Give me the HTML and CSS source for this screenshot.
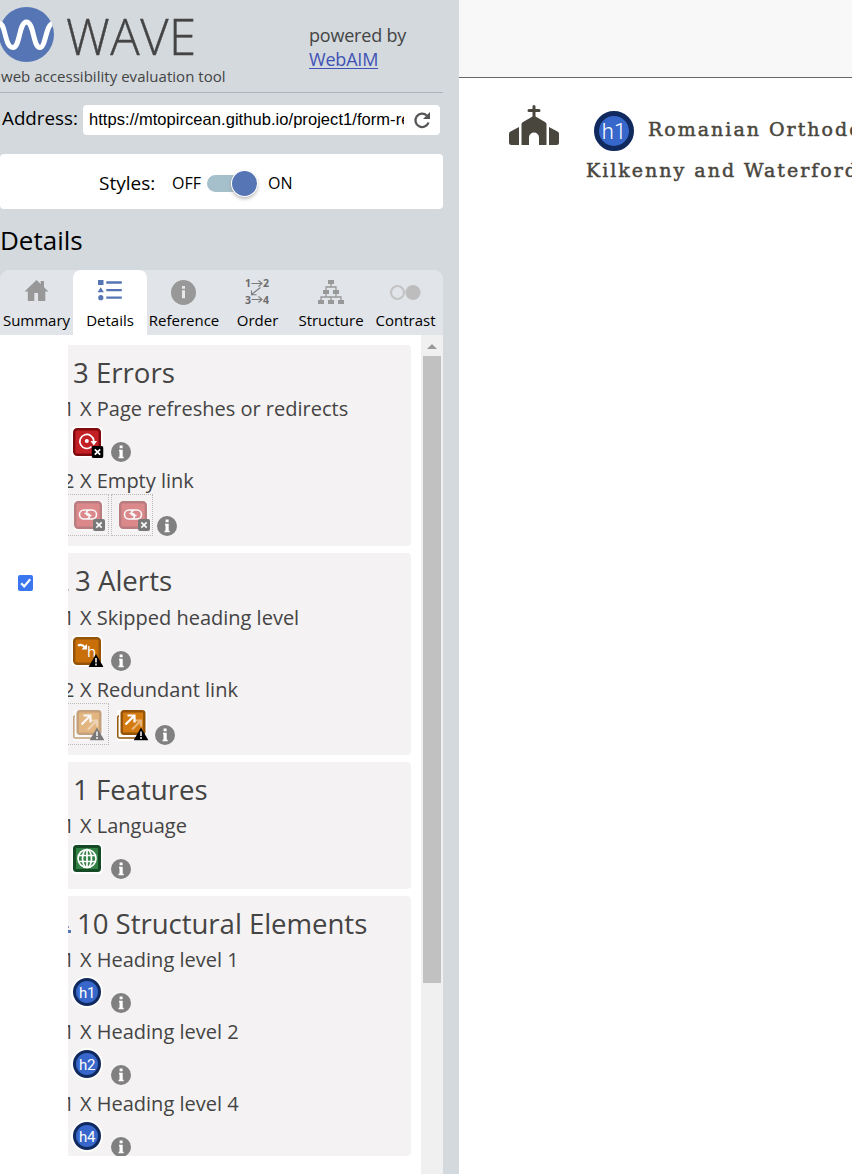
FILE: index.html
```html
<!DOCTYPE html>
<html lang="en">
<head>
<meta charset="utf-8">
<title>WAVE Report</title>
<link rel="stylesheet" href="styles.css">
</head>
<body>
<svg width="0" height="0" class="defs">
  <defs>
    <symbol id="info" viewBox="0 0 20 20"><circle cx="10" cy="10" r="10" fill="#808080"/><path d="M8.600 3.600h3v2.700h-3zM8 7.700h3.700v7h1v1.600H7.500v-1.600h1V9.200H8z" fill="#fff"/></symbol>
    <symbol id="xbadge" viewBox="0 0 12 12"><rect width="12" height="12" rx="2" fill="#000"/><path d="M3.300 3.300l5.400 5.400M8.700 3.300L3.300 8.700" stroke="#fff" stroke-width="1.700"/></symbol>
    <symbol id="warn" viewBox="0 0 15 13"><path d="M7.500 0L15 13H0z" fill="#000"/><path d="M7.500 4v4.600M7.500 9.600v1.800" stroke="#fff" stroke-width="1.500"/></symbol>
    <symbol id="emptylink" viewBox="0 0 32 32"><rect x="-1.500" y="-1.500" width="31" height="31" rx="4" fill="#fff"/><rect x="1.200" y="1.200" width="25.600" height="25.600" rx="3" fill="#c32026" stroke="#80090d" stroke-width="2.400"/><path d="M15.500 9H10a4.500 4.500 0 0 0 0 9h2.500c2.200 0 3-1.500 3-3.300c0-1.500-1-2.200-2.500-2.200H10.500M12.500 18H18a4.500 4.500 0 0 0 0-9h-2.500c-2.200 0-3 1.500-3 3.300c0 1.500 1 2.200 2.500 2.200h2.500" fill="none" stroke="#fff" stroke-width="1.600"/><use href="#xbadge" x="19" y="18" width="12" height="12"/></symbol>
    <symbol id="redundant" viewBox="0 0 32 32"><path d="M4 2.500H2.500a1.500 1.500 0 0 0-1.500 1.500v23a1.500 1.500 0 0 0 1.500 1.500h22" fill="none" stroke="#fff" stroke-width="5"/><path d="M2.500 6H1.800a1 1 0 0 0-1 1v19.500a1.500 1.500 0 0 0 1.500 1.500H23" fill="none" stroke="#955307" stroke-width="1.500"/><rect x="2" y="-1.500" width="28" height="27.500" rx="3" fill="#fff"/><rect x="4.700" y="1.200" width="22.600" height="22.600" rx="2" fill="#d37a10" stroke="#955307" stroke-width="2.400"/><path d="M15 19.500l8-8M18 10.500h6v6" fill="none" stroke="#e9b476" stroke-width="2.200"/><path d="M8.500 14.500l8-8M10.500 5.500h7v7" fill="none" stroke="#fff" stroke-width="2.200"/><use href="#warn" x="16.500" y="17.500" width="15" height="13"/></symbol>
  </defs>
</svg>
<div class="app">
  <aside class="sidebar">
    <header class="brand">
      <div class="brand-left">
        <div class="logo">
          <svg class="logo-mark" viewBox="0 0 54 55"><circle cx="26.500" cy="27.500" r="27.500" fill="#5575b5"/><path d="M-1 16.500C2 16.500 3 19 4.500 25C7 35 8.500 40.500 13 40.500C20 40.500 19 15 26.500 15C34 15 33 40.500 40 40.500C45.500 40.500 46 18 52 17" fill="none" stroke="#fff" stroke-width="5"/></svg>
          <span class="logo-text">WAVE</span>
        </div>
        <div class="tagline">web accessibility evaluation tool</div>
      </div>
      <div class="powered">powered by<br><a href="#">WebAIM</a></div>
    </header>
    <div class="address">
      <label class="address-label">Address:</label>
      <div class="address-box">
        <span class="address-url">https://mtopircean.github.io/project1/form-re</span>
        <svg class="refresh" viewBox="0 0 18 18"><path d="M15.500 11.500A6.700 6.700 0 1 1 13.800 4.500" fill="none" stroke="#555" stroke-width="2.300"/><path d="M17 1v7h-7z" fill="#555"/></svg>
      </div>
    </div>
    <div class="styles-box">
      <span class="styles-label">Styles:</span><span class="off">OFF</span>
      <span class="switch"><span class="knob"></span></span>
      <span class="on">ON</span>
    </div>
    <h2 class="section-title">Details</h2>
    <nav class="tabs">
      <div class="tab"><svg viewBox="0 0 26 26"><path d="M12.500 2L.5 13.500h3.300V23h6.500v-8H14v8h7.300v-9.500h3.200l-4.500-4.300V3h-3.300v3z" fill="#989898"/></svg><span>Summary</span></div>
      <div class="tab active"><svg viewBox="0 0 26 26"><path d="M1 2h5.500v5H1zM3.700 9.300l3.200 5H.6z" fill="#5575b5"/><circle cx="3.800" cy="19.700" r="2.600" fill="#5575b5"/><path d="M9.300 4.500h15.500M9.300 12.200h15.500M9.300 19.700h15.500" stroke="#5575b5" stroke-width="2.300"/></svg><span>Details</span></div>
      <div class="tab"><svg viewBox="0 0 26 26"><circle cx="12.500" cy="14.500" r="12.500" fill="#989898"/><path d="M11 8h3v2.800h-3zM11 12.300h3v8h-3z" fill="#e6e8ea"/></svg><span>Reference</span></div>
      <div class="tab"><svg viewBox="0 0 26 26"><g fill="#6c6c6c" font-family="Open Sans" font-size="10.500" font-weight="700"><text x="0" y="9">1</text><text x="18" y="9">2</text><text x="0" y="25.500">3</text><text x="18" y="25.500">4</text></g><path d="M6.500 5.500h10M13.500 2.500l3.500 3-3.500 3M6.500 21.500h10M13.500 18.500l3.500 3-3.500 3M15.500 9.500L6.500 16.500M6.500 12.500v4.300h5" fill="none" stroke="#7b7b7b" stroke-width="1.100"/></svg><span>Order</span></div>
      <div class="tab"><svg viewBox="0 0 26 26"><path d="M10 2h6v4h-6zM5 12h6v4H5zM15 12h6v4h-6zM0 22h6v4H0zM10 22h6v4h-6zM20 22h6v4h-6z" fill="#989898"/><path d="M13 6v3M8 12V9h10v3M8 16v3M18 16v3M3 22v-3h20v3M13 19v3" fill="none" stroke="#989898" stroke-width="1.300"/></svg><span>Structure</span></div>
      <div class="tab"><svg class="wide" viewBox="0 0 32 26"><circle cx="7.500" cy="14.500" r="6.500" fill="none" stroke="#c4c4c4" stroke-width="2.200"/><circle cx="23" cy="14.500" r="7.600" fill="#bdbdbd"/></svg><span>Contrast</span></div>
    </nav>
    <div class="panel">
      <div class="checks"><svg class="checkbox" viewBox="0 0 15 16"><rect width="15" height="16" rx="2" fill="#3a76f0"/><path d="M3.200 8.200l3 3.200 6-7.200" fill="none" stroke="#fff" stroke-width="2.200"/></svg></div>
      <div class="groups">
        <section class="card errors">
          <h3><span>3 Errors</span></h3>
          <p><b class="one">1</b><span>X Page refreshes or redirects</span></p>
          <div class="icons"><svg class="ico" viewBox="0 0 32 32"><rect x="-1.500" y="-1.500" width="31" height="31" rx="4" fill="#fff"/><rect x="1.200" y="1.200" width="25.600" height="25.600" rx="3" fill="#c32026" stroke="#80090d" stroke-width="2.400"/><path d="M18.500 18.700A7 7 0 1 1 20.800 13" fill="none" stroke="#fff" stroke-width="1.700"/><path d="M17.500 13h6.500l-3.200 4.500z" fill="#fff"/><circle cx="13.800" cy="13" r="2" fill="#fff"/><use href="#xbadge" x="18.500" y="18" width="12" height="12"/></svg><svg class="info"><use href="#info"/></svg></div>
          <p><b>2</b><span>X Empty link</span></p>
          <div class="icons"><span class="hidden-item first"><svg class="ico"><use href="#emptylink"/></svg></span><span class="hidden-item second"><svg class="ico"><use href="#emptylink"/></svg></span><svg class="info after-pair"><use href="#info"/></svg></div>
        </section>
        <section class="card alerts">
          <h3><i class="edge"></i><span class="h-alerts">3 Alerts</span></h3>
          <p><b class="one">1</b><span>X Skipped heading level</span></p>
          <div class="icons"><svg class="ico" viewBox="0 0 32 32"><rect x="-1.500" y="-1.500" width="31" height="31" rx="4" fill="#fff"/><rect x="1.200" y="1.200" width="25.600" height="25.600" rx="3" fill="#c96f09" stroke="#955307" stroke-width="2.400"/><path d="M5 8.500c3-1.500 5-.5 6.500 1.500" fill="none" stroke="#fff" stroke-width="2.200"/><path d="M14 7v5.500H8.500z" fill="#fff"/><text x="14" y="19.500" font-family="Open Sans" font-size="15" fill="#fff">h</text><use href="#warn" x="15.500" y="17" width="15" height="13"/></svg><svg class="info"><use href="#info"/></svg></div>
          <p><b>2</b><span>X Redundant link</span></p>
          <div class="icons"><span class="hidden-item first"><svg class="ico"><use href="#redundant"/></svg></span><svg class="ico next"><use href="#redundant"/></svg><svg class="info after-next"><use href="#info"/></svg></div>
        </section>
        <section class="card features">
          <h3><span>1 Features</span></h3>
          <p><b class="one">1</b><span>X Language</span></p>
          <div class="icons"><svg class="ico" viewBox="0 0 32 32"><rect x="-1.500" y="-1.500" width="31" height="30.500" rx="4" fill="#fff"/><rect x="1.500" y="1.500" width="25" height="24" rx="2" fill="#318044" stroke="#154b24" stroke-width="3"/><g fill="none" stroke="#fff" stroke-width="1.700"><circle cx="14" cy="13.500" r="9"/><ellipse cx="14" cy="13.500" rx="4.500" ry="9"/><path d="M14 4.500v18M5.500 10.500h17M5.500 16.500h17"/></g></svg><svg class="info"><use href="#info"/></svg></div>
        </section>
        <section class="card structure">
          <h3><i class="edge blue"></i><span class="h-structure">10 Structural Elements</span></h3>
          <p><b class="one">1</b><span>X Heading level 1</span></p>
          <div class="icons"><span class="hbadge">h1</span><svg class="info"><use href="#info"/></svg></div>
          <p><b class="one">1</b><span>X Heading level 2</span></p>
          <div class="icons"><span class="hbadge">h2</span><svg class="info"><use href="#info"/></svg></div>
          <p><b class="one">1</b><span>X Heading level 4</span></p>
          <div class="icons"><span class="hbadge">h4</span><svg class="info"><use href="#info"/></svg></div>
        </section>
      </div>
      <div class="scrollbar"><div class="arrow"></div><div class="thumb"></div></div>
    </div>
  </aside>
  <main class="page">
    <div class="page-bar"></div>
    <div class="page-head">
      <svg class="church" viewBox="0 0 50 42"><path d="M23.500 1.500a1.500 1.500 0 0 1 3 0V4H30a1.500 1.500 0 0 1 0 3h-3.500v4.500L36 17c1 .6 1.500 1.200 1.500 2.500V40H30v-7.500a5 5 0 0 0-10 0V40h-7.500V19.500c0-1.300.5-1.900 1.500-2.500l9.500-5.500V7H20a1.500 1.500 0 0 1 0-3h3.500zM10 22v18H2.500A2.500 2.500 0 0 1 0 37.500V29c0-1.300.5-2 1.500-2.600zM40 22l8.500 4.400c1 .6 1.500 1.300 1.500 2.600v8.500a2.500 2.500 0 0 1-2.500 2.500H40z" fill="#49463d"/></svg>
      <h1 class="page-title"><span class="line first-line"><span class="hbadge big">h1</span><span class="first-words">Romanian Orthodox</span></span><span class="line">Kilkenny and Waterford</span></h1>
    </div>
  </main>
</div>
</body>
</html>
```
FILE: styles.css
```css
* { box-sizing: border-box; }
body { margin: 0; width: 852px; height: 1174px; overflow: hidden; background: #fff; font-family: "Open Sans", sans-serif; color: #000; }
.defs { display: block; height: 0; }
.app { display: flex; height: 1174px; }
svg { display: block; overflow: visible; flex: none; }
h1, h2, h3, p { margin: 0; font-weight: 400; }
span { white-space: nowrap; }

.sidebar { width: 459px; flex: none; padding-right: 16px; background: #d3d9dd; display: flex; flex-direction: column; }
.brand { height: 93px; border-bottom: 1px solid #abb4bd; display: flex; overflow: hidden; color: #444; }
.brand-left { width: 309px; flex: none; }
.logo { display: flex; height: 65px; padding-top: 7px; }
.logo-mark { width: 54px; height: 55px; overflow: hidden; }
.logo-text { margin-left: 12px; font-size: 49px; font-weight: 300; line-height: 58px; letter-spacing: 0.5px; -webkit-text-stroke: 0.4px #444; }
.tagline { font-size: 15px; line-height: 22px; padding-left: 1px; white-space: nowrap; letter-spacing: 0.03px; }
.powered { padding-top: 23px; font-size: 18px; line-height: 24px; letter-spacing: -0.2px; white-space: nowrap; }
.powered a { color: #3f51b5; text-underline-offset: 2px; text-decoration-thickness: 1px; }

.address { display: flex; padding: 12px 3px 0 2px; height: 61px; }
.address-label { width: 81px; font-size: 18.8px; line-height: 27px; }
.address-box { width: 357px; height: 30px; background: #fff; border-radius: 4px; display: flex; align-items: center; padding-left: 6px; }
.address-url { width: 315px; overflow: hidden; font: 16.500px/26px "Liberation Sans", Arial, sans-serif; letter-spacing: 0.05px; padding-bottom: 2px; }
.refresh { width: 18px; height: 18px; margin-left: 9px; }

.styles-box { height: 55px; background: #fff; border-radius: 4px; display: flex; align-items: center; padding: 0 0 0 99px; }
.styles-label { width: 73px; font-size: 19px; line-height: 24px; margin-top: 3px; }
.off, .on { font-size: 16px; margin-top: 3px; }
.off { width: 35px; }
.switch { width: 50px; height: 17px; margin-top: 4px; border-radius: 9px; background: #a5bfcb; display: flex; align-items: center; justify-content: flex-end; }
.knob { width: 25px; height: 25px; border-radius: 50%; background: #5575b5; box-shadow: 0 0 0 1px #fff, 0 2px 4px #999; flex: none; }
.on { margin-left: 11px; }
.section-title { height: 61px; font-size: 26px; line-height: 62px; }

.tabs { display: grid; grid-template-columns: 73px 74px 74px 73px 74px 75px; height: 65px; background: #e1e4e9; border-radius: 9px 9px 0 0; font-size: 15px; }
.tab { display: flex; flex-direction: column; align-items: center; padding-top: 8px; }
.tab svg { width: 26px; height: 26px; }
.tab svg.wide { width: 32px; }
.tab span { line-height: 22px; margin-top: 5px; }
.tab.active { background: #fff; border-radius: 8px 8px 0 0; }

.panel { flex: 1; background: #fff; display: flex; }
.checks { width: 68px; padding: 240px 0 0 18px; }
.checkbox { width: 15px; height: 16px; }
.groups { width: 343px; margin-right: 10px; padding-top: 10px; display: flex; flex-direction: column; gap: 7px; }
.card { background: #f4f2f3; border-radius: 0 4px 4px 0; overflow: hidden; color: #444; flex: none; }
.errors { height: 201px; }
.alerts { height: 202px; }
.features { height: 127px; }
.structure { height: 260px; }
.card h3 { height: 46px; line-height: 54px; font-size: 27.600px; padding-left: 5px; display: flex; position: relative; }
.card.alerts h3 { height: 47px; line-height: 55px; }
.card p { height: 36px; line-height: 36px; font-size: 20px; display: flex; }
.card p b { font-weight: 400; width: 17px; margin-left: -5px; }
.card p b.one { width: 17px; margin-left: -5px; }
.edge { position: absolute; left: 0; top: 36px; width: 1px; height: 2px; background: #bbb; }
.edge.blue { top: 30px; width: 3px; height: 7px; background: linear-gradient(90deg, #8595c0 0 1px, transparent 1px) 0 0 / 3px 2px no-repeat, linear-gradient(#5575b5, #5575b5) 0 4px / 3px 3px no-repeat; }
.h-alerts { margin-left: 2px; }
.h-structure { margin-left: 4px; letter-spacing: -0.05px; }
.icons { display: flex; height: 36px; padding-left: 5px; align-items: flex-start; }
.ico { width: 32px; height: 32px; margin-top: 1px; }
.info { width: 20px; height: 20px; margin: 15px 0 0 6px; }
.hidden-item { width: 41px; height: 42px; border: 1px dotted #bbb; margin-top: -5px; padding: 5px 0 0 6px; flex: none; }
.hidden-item .ico { opacity: 0.5; }
.hidden-item.first { margin-left: -5px; border-left: 0; }
.hidden-item.second { margin-left: 2px; width: 42px; padding-left: 7px; }
.alerts .hidden-item { padding-left: 5px; }
.info.after-pair { margin: 17px 0 0 4px; }
.ico.next { margin: 2px 0 0 8px; }
.info.after-next { margin: 17px 0 0 6px; }
.hbadge { width: 28px; height: 28px; margin: 0 4px 0 0; border-radius: 50%; background: #3767cb; border: 3px solid #10295e; box-shadow: 0 0 0 2px #fff; color: #fff; font: 15px/24px Roboto, sans-serif; letter-spacing: -0.4px; text-align: center; flex: none; }

.scrollbar { width: 22px; background: #f0f0f0; display: flex; flex-direction: column; align-items: center; }
.arrow { width: 0; height: 0; margin: 9px 0 7px; border: 5px solid transparent; border-top: 0; border-bottom-color: #999; }
.thumb { width: 18px; height: 627px; background: #c1c1c1; }

.page { flex: 1; overflow: hidden; }
.page-bar { height: 78px; background: #f8f8f8; border-bottom: 1px solid #666; }
.page-head { display: flex; padding: 27px 0 0 50px; }
.church { width: 50px; height: 42px; }
.page-title { margin-left: 27px; display: flex; flex-direction: column; font: 400 19px/41px "DejaVu Serif", serif; letter-spacing: 2px; color: #49463d; -webkit-text-stroke: 0.5px #49463d; }
.line { display: flex; }
.first-line { height: 45px; padding-left: 8px; }
.first-words { padding-top: 4px; }
.hbadge.big { width: 40px; height: 40px; margin: 6px 14px 0 0; border-width: 5px; box-shadow: none; font-size: 22px; line-height: 31px; font-weight: 300; letter-spacing: 0; -webkit-text-stroke: 0; }
```
